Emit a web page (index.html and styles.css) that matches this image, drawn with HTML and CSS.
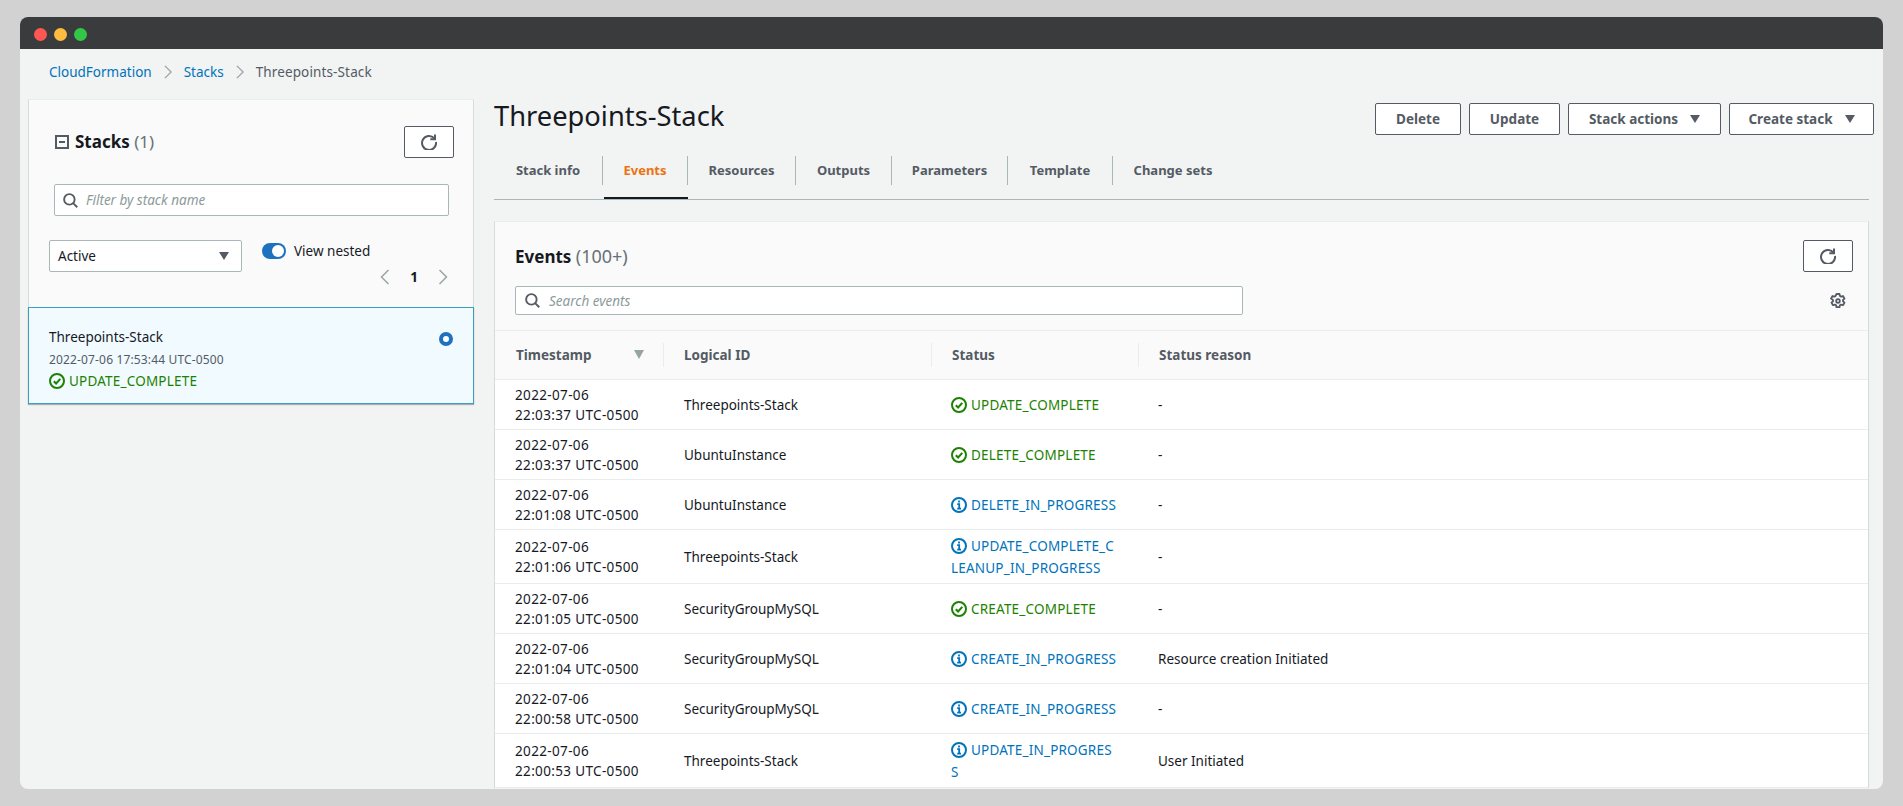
FILE: index.html
```html
<!doctype html>
<html lang="en">

<head>
  <meta charset="utf-8">
  <title>Threepoints-Stack - CloudFormation</title>
  <link rel="stylesheet" href="styles.css">
</head>

<body>
  <svg class="sprite" width="0" height="0">
    <symbol id="i_ok" viewBox="0 0 16 16">
      <circle cx="8" cy="8" r="7" fill="none" stroke="currentColor" stroke-width="2"/>
      <path d="M4.8 8.2l2.3 2.3 4.2-4.6" fill="none" stroke="currentColor" stroke-width="2"/>
    </symbol>
    <symbol id="i_info" viewBox="0 0 16 16">
      <circle cx="8" cy="8" r="7" fill="none" stroke="currentColor" stroke-width="2"/>
      <path d="M6.2 7.2h2v4.2M6.2 11.6h3.8M8 3.6v2" fill="none" stroke="currentColor" stroke-width="1.8"/>
    </symbol>
    <symbol id="i_refresh" viewBox="0 0 16 16">
      <path d="M13.2 4.2A7 7 0 1 0 15 8" fill="none" stroke="currentColor" stroke-width="2"/>
      <path d="M14 0.5v4.7H9.3" fill="none" stroke="currentColor" stroke-width="2"/>
    </symbol>
    <symbol id="i_search" viewBox="0 0 16 16">
      <circle cx="6.8" cy="6.8" r="5.6" fill="none" stroke="currentColor" stroke-width="2"/>
      <path d="M10.8 10.8l4.4 4.4" fill="none" stroke="currentColor" stroke-width="2"/>
    </symbol>
    <symbol id="i_crumb" viewBox="0 0 16 16">
      <path d="M4.5 1l7 7-7 7" fill="none" stroke="currentColor" stroke-width="1.5"/>
    </symbol>
  </svg>

  <div class="window">
    <div class="titlebar">
      <span class="dot dot_red"></span>
      <span class="dot dot_yellow"></span>
      <span class="dot dot_green"></span>
    </div>

    <div class="crumbs">
      <a class="crumb_link">CloudFormation</a>
      <svg class="crumb_sep"><use href="#i_crumb"/></svg>
      <a class="crumb_link">Stacks</a>
      <svg class="crumb_sep"><use href="#i_crumb"/></svg>
      <span class="crumb_here">Threepoints-Stack</span>
    </div>

    <div class="columns">
      <div class="side">
        <div class="side_box">
          <div class="side_head">
            <div class="side_title">
              <span class="collapse"></span>
              <h2 class="h_stacks">Stacks <span class="count">(1)</span></h2>
            </div>
            <button class="btn btn_icon"><svg class="ico_refresh"><use href="#i_refresh"/></svg></button>
          </div>
          <div class="input input_side">
            <svg class="ico_search"><use href="#i_search"/></svg>
            <span class="placeholder">Filter by stack name</span>
          </div>
          <div class="side_filters">
            <div class="select">Active<span class="caret caret_select"></span></div>
            <div class="side_right">
              <div class="nested">
                <span class="toggle"><span class="knob"></span></span>
                <span>View nested</span>
              </div>
              <div class="pager">
                <svg class="pager_arrow pager_prev"><use href="#i_crumb"/></svg>
                <b>1</b>
                <svg class="pager_arrow"><use href="#i_crumb"/></svg>
              </div>
            </div>
          </div>
        </div>
        <div class="card">
          <div class="card_text">
            <div class="card_name">Threepoints-Stack</div>
            <div class="card_date">2022-07-06 17:53:44 UTC-0500</div>
            <div class="card_status ok"><svg class="ico_st"><use href="#i_ok"/></svg>UPDATE_COMPLETE</div>
          </div>
          <span class="radio"></span>
        </div>
      </div>

      <div class="main">
        <div class="main_head">
          <h1 class="h_page">Threepoints-Stack</h1>
          <div class="actions">
            <button class="btn btn_delete">Delete</button>
            <button class="btn btn_update">Update</button>
            <button class="btn btn_stackact">Stack actions<span class="caret"></span></button>
            <button class="btn btn_create">Create stack<span class="caret"></span></button>
          </div>
        </div>

        <div class="tabs">
          <a class="tab tab_info">Stack info</a>
          <a class="tab tab_on tab_events">Events</a>
          <a class="tab tab_res">Resources</a>
          <a class="tab tab_out">Outputs</a>
          <a class="tab tab_par">Parameters</a>
          <a class="tab tab_tpl">Template</a>
          <a class="tab tab_chg">Change sets</a>
        </div>

        <div class="panel">
          <div class="panel_head">
            <div class="panel_top">
              <h2 class="h_events">Events <span class="count">(100+)</span></h2>
              <button class="btn btn_icon"><svg class="ico_refresh"><use href="#i_refresh"/></svg></button>
            </div>
            <div class="panel_search">
              <div class="input input_main">
                <svg class="ico_search"><use href="#i_search"/></svg>
                <span class="placeholder">Search events</span>
              </div>
              <svg class="ico_gear" viewBox="0 0 16 16">
                <path d="M6.5 1h3l.4 1.9 1.2.7 1.9-.6 1.5 2.6-1.5 1.3v1.4l1.5 1.3-1.5 2.6-1.9-.6-1.2.7-.4 1.9h-3l-.4-1.9-1.2-.7-1.9.6-1.5-2.6 1.5-1.3V6.900L1 5.600 2.500 3l1.900.6 1.200-.7z" fill="none" stroke="currentColor" stroke-width="1.800" stroke-linejoin="round"/>
                <circle cx="8" cy="8" r="1.800" fill="none" stroke="currentColor" stroke-width="1.800"/>
              </svg>
            </div>
          </div>

          <table class="events">
            <colgroup>
              <col class="col_time">
              <col class="col_id">
              <col class="col_status">
              <col>
            </colgroup>
            <thead>
              <tr>
                <th><span class="th_in th_first">Timestamp<span class="sort"></span></span></th>
                <th><span class="th_in">Logical ID</span></th>
                <th><span class="th_in">Status</span></th>
                <th><span class="th_in th_last">Status reason</span></th>
              </tr>
            </thead>
            <tbody>
              <tr>
                <td>2022-07-06<br>22:03:37 UTC-0500</td>
                <td>Threepoints-Stack</td>
                <td class="td_st ok"><svg class="ico_st"><use href="#i_ok"/></svg>UPDATE_COMPLETE</td>
                <td>-</td>
              </tr>
              <tr>
                <td>2022-07-06<br>22:03:37 UTC-0500</td>
                <td>UbuntuInstance</td>
                <td class="td_st ok"><svg class="ico_st"><use href="#i_ok"/></svg>DELETE_COMPLETE</td>
                <td>-</td>
              </tr>
              <tr>
                <td>2022-07-06<br>22:01:08 UTC-0500</td>
                <td>UbuntuInstance</td>
                <td class="td_st prog"><svg class="ico_st"><use href="#i_info"/></svg>DELETE_IN_PROGRESS</td>
                <td>-</td>
              </tr>
              <tr>
                <td>2022-07-06<br>22:01:06 UTC-0500</td>
                <td>Threepoints-Stack</td>
                <td class="td_st prog"><svg class="ico_st"><use href="#i_info"/></svg>UPDATE_COMPLETE_CLEANUP_IN_PROGRESS</td>
                <td>-</td>
              </tr>
              <tr>
                <td>2022-07-06<br>22:01:05 UTC-0500</td>
                <td>SecurityGroupMySQL</td>
                <td class="td_st ok"><svg class="ico_st"><use href="#i_ok"/></svg>CREATE_COMPLETE</td>
                <td>-</td>
              </tr>
              <tr>
                <td>2022-07-06<br>22:01:04 UTC-0500</td>
                <td>SecurityGroupMySQL</td>
                <td class="td_st prog"><svg class="ico_st"><use href="#i_info"/></svg>CREATE_IN_PROGRESS</td>
                <td>Resource creation Initiated</td>
              </tr>
              <tr>
                <td>2022-07-06<br>22:00:58 UTC-0500</td>
                <td>SecurityGroupMySQL</td>
                <td class="td_st prog"><svg class="ico_st"><use href="#i_info"/></svg>CREATE_IN_PROGRESS</td>
                <td>-</td>
              </tr>
              <tr>
                <td>2022-07-06<br>22:00:53 UTC-0500</td>
                <td>Threepoints-Stack</td>
                <td class="td_st prog"><svg class="ico_st"><use href="#i_info"/></svg>UPDATE_IN_PROGRESS</td>
                <td>User Initiated</td>
              </tr>
            </tbody>
          </table>
        </div>
      </div>
    </div>
  </div>
</body>

</html>
```

FILE: styles.css
```css
* {
  box-sizing: border-box;
}

html, body {
  height: 100%;
  overflow: hidden;
}

body {
  margin: 0;
  padding: 17px 20px;
  background-color: #d2d2d2;
  color: #16191f;
  font-family: "Noto Sans", "Open Sans", sans-serif;
  font-size: 13.5px;
  line-height: 20px;
}

.sprite {
  position: absolute;
}

.window {
  height: 772px;
  overflow: hidden;
  background-color: #f2f3f3;
  border-radius: 8px;
}

.titlebar {
  display: flex;
  align-items: center;
  gap: 7px;
  height: 32px;
  padding: 2px 0 0 14px;
  background-color: #3a3b3d;
}

.dot {
  width: 13px;
  height: 13px;
  border-radius: 50%;
}

.dot_red { background-color: #fc5753; }
.dot_yellow { background-color: #fdbc40; }
.dot_green { background-color: #33c748; }

.crumbs {
  display: flex;
  align-items: center;
  height: 50px;
  padding: 0 0 4px 29px;
}

.crumb_link {
  color: #0073bb;
}

.crumb_here {
  color: #545b64;
  letter-spacing: .13px;
}

.crumb_sep {
  width: 14px;
  height: 14px;
  margin: 0 9px;
  color: #9aa5a8;
}

.columns {
  display: flex;
  align-items: flex-start;
}

/* left stack list */
.side {
  width: 446px;
  margin-left: 8px;
  flex: none;
}

.side_box {
  height: 208px;
  padding: 26px 19px 0 20px;
  background-color: #fafafa;
  border-top: 1px solid #eaeded;
  border-left: 1px solid #d5dbdb;
  border-right: 1px solid #d5dbdb;
}

.side_head {
  display: flex;
  justify-content: space-between;
  align-items: center;
}

.side_title {
  display: flex;
  align-items: center;
  gap: 6px;
  margin-left: 6px;
}

.collapse {
  position: relative;
  width: 14px;
  height: 14px;
  border: 2px solid #545b64;
}

.collapse::after {
  content: "";
  position: absolute;
  left: 2px;
  top: 4px;
  width: 6px;
  height: 2px;
  background-color: #545b64;
}

h1, h2 {
  margin: 0;
}

.h_stacks, .h_events {
  font-size: 17px;
  font-weight: 700;
  line-height: 24px;
}

.count {
  color: #687078;
  font-weight: 400;
}

.h_events .count {
  font-size: 18px;
}

.btn {
  height: 32px;
  padding: 0;
  background-color: #fff;
  border: 1px solid #545b64;
  border-radius: 2px;
  color: #545b64;
  font-family: inherit;
  font-size: 13.5px;
  font-weight: 700;
}

.btn_icon {
  width: 50px;
  flex: none;
}

.ico_refresh {
  display: block;
  width: 16px;
  height: 16px;
  margin: 0 auto;
}

.input {
  display: flex;
  align-items: center;
  gap: 8px;
  background-color: #fff;
  border: 1px solid #aab7b8;
  border-radius: 2px;
  padding-left: 8px;
}

.input_side {
  width: 395px;
  height: 32px;
  margin: 26px 0 0 5px;
}

.input_main {
  width: 728px;
  height: 29px;
  gap: 9px;
  padding-left: 9px;
}

.ico_search {
  width: 15px;
  height: 15px;
  color: #545b64;
}

.placeholder {
  color: #8d9a9b;
  font-size: 13.5px;
  font-style: italic;
}

.side_filters {
  display: flex;
  margin-top: 24px;
}

.select {
  position: relative;
  width: 193px;
  height: 32px;
  padding: 5px 8px;
  background-color: #fff;
  border: 1px solid #aab7b8;
  border-radius: 2px;
}

.caret {
  display: inline-block;
  width: 0;
  height: 0;
  border-left: 5.5px solid transparent;
  border-right: 5.5px solid transparent;
  border-top: 8px solid #545b64;
}

.caret_select {
  position: absolute;
  right: 12px;
  top: 11px;
}

.side_right {
  margin-left: 20px;
}

.nested {
  display: flex;
  align-items: center;
  gap: 8px;
  margin-top: 1px;
}

.toggle {
  display: block;
  position: relative;
  width: 24px;
  height: 16px;
  background-color: #1e72bd;
  border-radius: 8px;
}

.knob {
  position: absolute;
  right: 2px;
  top: 2px;
  width: 12px;
  height: 12px;
  background-color: #fff;
  border-radius: 50%;
}

.pager {
  display: flex;
  align-items: center;
  justify-content: flex-end;
  gap: 16px;
  width: 189px;
  margin-top: 6px;
}

.pager b {
  width: 10px;
  text-align: center;
}

.pager_arrow {
  width: 16px;
  height: 16px;
  color: #9aa5a8;
}

.pager_prev {
  transform: scaleX(-1);
}

.card {
  display: flex;
  justify-content: space-between;
  height: 97px;
  padding: 19px 20px 0 20px;
  background-color: #f1faff;
  border: 1px solid #3a9ec0;
  box-shadow: 0 1px 1px rgba(0, 28, 36, .3);
}

.card_name {
  font-size: 13.5px;
}

.card_date {
  margin-top: 3px;
  color: #545b64;
  font-size: 12px;
  letter-spacing: .15px;
}

.card_status {
  margin-top: 1px;
  letter-spacing: .2px;
}

.radio {
  width: 14px;
  height: 14px;
  margin-top: 5px;
  border: 4px solid #1e72bd;
  background-color: #fff;
  border-radius: 50%;
}

/* right column */
.main {
  flex: 1;
  min-width: 0;
  margin-left: 20px;
  margin-right: 14px;
  margin-top: -4px;
}

.main_head {
  display: flex;
  justify-content: space-between;
  align-items: center;
  height: 44px;
  margin-top: 2px;
}

.h_page {
  font-size: 27.3px;
  font-weight: 400;
  line-height: 36px;
  margin-top: -6px;
}

.actions {
  display: flex;
  gap: 8px;
  margin-right: -5px;
}

.btn_delete { width: 86px; }
.btn_update { width: 91px; }
.btn_stackact { width: 153px; }
.btn_create { width: 145px; }

.btn .caret {
  margin-left: 12px;
  vertical-align: 1px;
}

.tabs {
  display: flex;
  align-items: stretch;
  height: 44px;
  margin-top: 15px;
  border-bottom: 1px solid #aab7b8;
  padding-bottom: 14px;
}

.tab {
  display: flex;
  align-items: center;
  justify-content: center;
  padding-bottom: 2px;
  border-right: 1px solid #aab7b8;
  color: #545b64;
  font-weight: 700;
  font-size: 13px;
}

.tab_info { width: 109px; }
.tab_events { width: 85px; }
.tab_res { width: 108px; }
.tab_out { width: 96px; }
.tab_par { width: 116px; }
.tab_tpl { width: 105px; }

.tab_chg {
  width: 120px;
  border-right: 0;
}

.tab_on {
  position: relative;
  color: #ec7211;
}

.tab_on::after {
  content: "";
  position: absolute;
  left: 1px;
  right: -1px;
  bottom: -14px;
  height: 2px;
  background-color: #16191f;
}

.panel {
  margin-top: 21px;
  background-color: #fff;
  border-top: 1px solid #eaeded;
  border-left: 1px solid #d5dbdb;
  border-right: 1px solid #d5dbdb;
}

.panel_head {
  height: 109px;
  padding: 18px 15px 0 20px;
  background-color: #fafafa;
  border-bottom: 1px solid #eaeded;
}

.panel_top {
  display: flex;
  justify-content: space-between;
  align-items: center;
}

.panel_search {
  display: flex;
  justify-content: space-between;
  align-items: center;
  margin-top: 14px;
  padding-right: 7px;
}

.ico_gear {
  width: 16px;
  height: 16px;
  color: #545b64;
}

.events {
  width: 100%;
  table-layout: fixed;
  border-collapse: collapse;
}

.col_time { width: 169px; }
.col_id { width: 268px; }
.col_status { width: 207px; }

.events th {
  height: 48px;
  padding: 0;
  background-color: #fafafa;
  border-bottom: 1px solid #eaeded;
  color: #545b64;
  font-weight: 700;
  text-align: left;
}

.th_in {
  display: flex;
  justify-content: space-between;
  align-items: center;
  height: 24px;
  padding-left: 20px;
  border-right: 1px solid #eaeded;
}

.th_first {
  padding: 0 19px 0 21px;
}

.th_last {
  border-right: 0;
}

.sort {
  width: 0;
  height: 0;
  border-left: 5.5px solid transparent;
  border-right: 5.5px solid transparent;
  border-top: 9px solid #95a5a6;
}

.events td {
  padding: 5px 20px 4px;
  border-bottom: 1px solid #eaeded;
  vertical-align: middle;
}

.events td:first-child {
  letter-spacing: .35px;
}

.events td:last-child {
  padding-left: 19px;
}

.events td.td_st {
  padding-left: 19px;
  line-height: 22px;
  letter-spacing: .2px;
  word-break: break-all;
}

.ok { color: #1d8102; }
.prog { color: #0073bb; }

.ico_st {
  width: 16px;
  height: 16px;
  margin-right: 4px;
  vertical-align: -3px;
}
```
